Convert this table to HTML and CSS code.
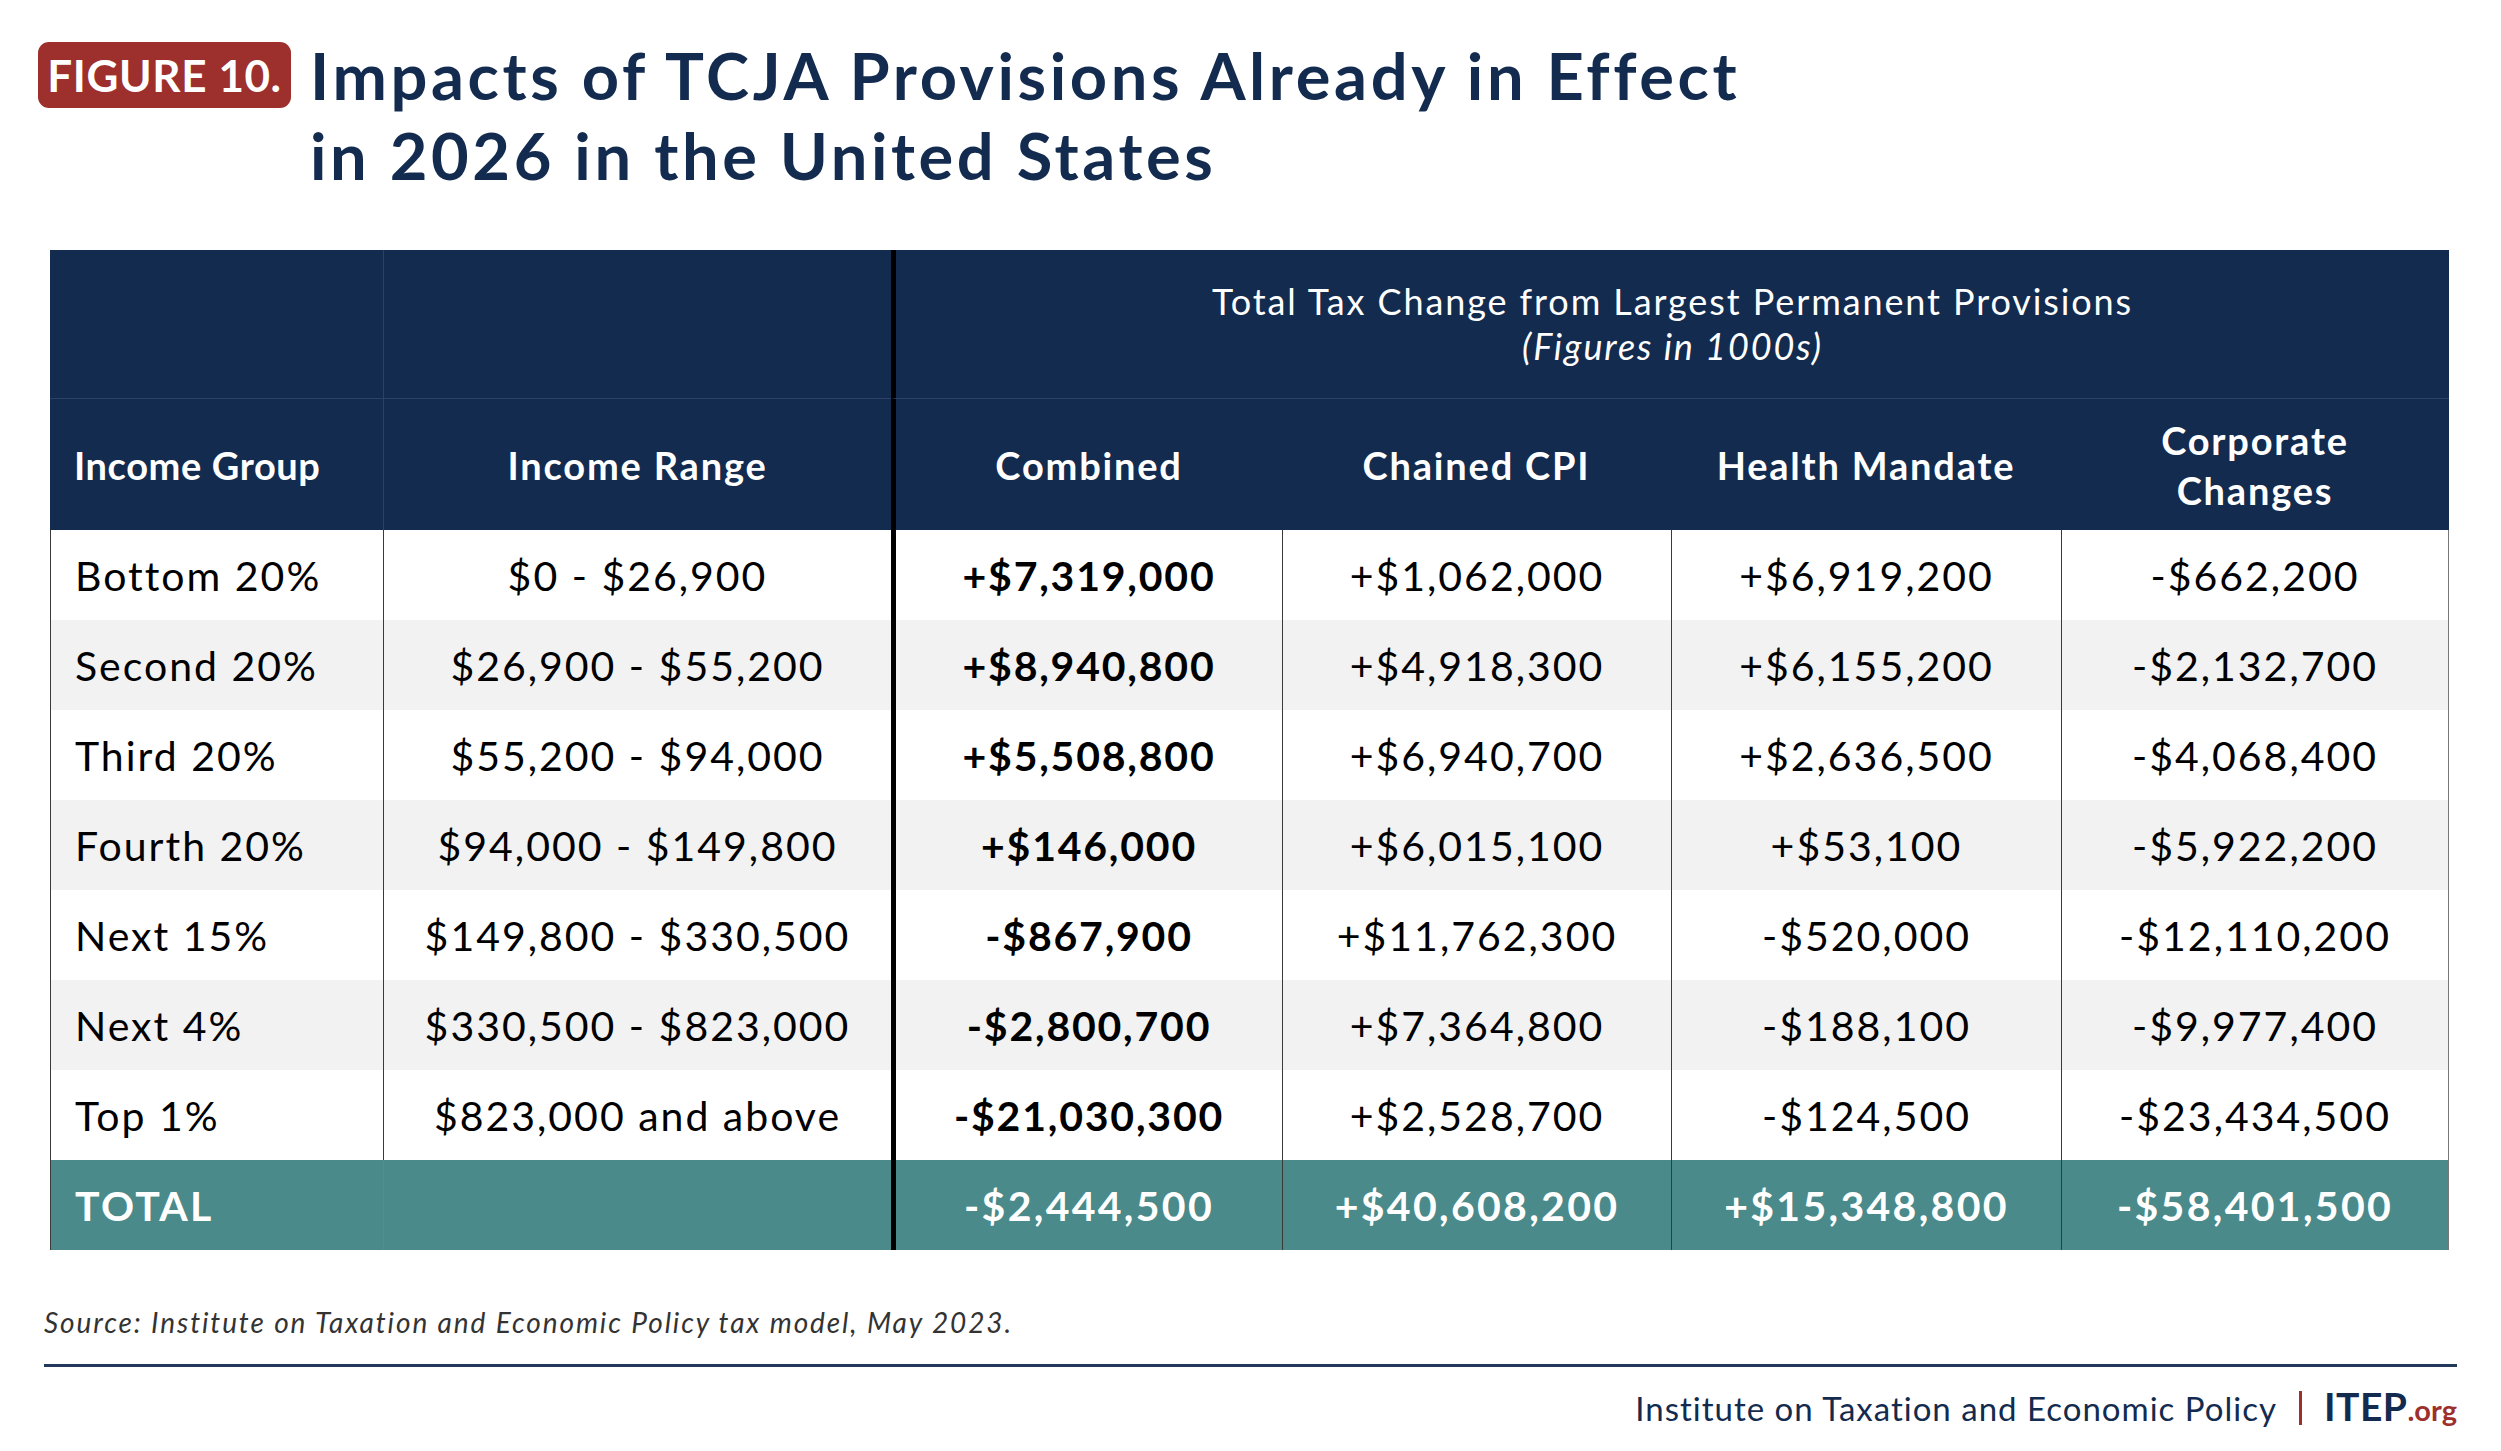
FILE: index.html
```html
<!DOCTYPE html>
<html lang="en">
<head>
<meta charset="utf-8">
<title>Impacts of TCJA Provisions Already in Effect in 2026 in the United States</title>
<link rel="stylesheet" href="styles.css">
</head>
<body>
<div class="page">
  <header class="title-block">
    <div class="badge">FIGURE 10.</div>
    <h1 class="title">Impacts of TCJA Provisions Already in Effect<br>in 2026 in the United States</h1>
  </header>

  <div class="grid">
    <div class="hc h1 c1"></div>
    <div class="hc h1 c2"></div>
    <div class="hc h1 span4">
      <div>Total Tax Change from Largest Permanent Provisions</div>
      <div class="ital">(Figures in 1000s)</div>
    </div>

    <div class="hc h2 c1 left">Income Group</div>
    <div class="hc h2 c2">Income Range</div>
    <div class="hc h2 c3">Combined</div>
    <div class="hc h2">Chained CPI</div>
    <div class="hc h2">Health Mandate</div>
    <div class="hc h2">Corporate<br>Changes</div>

    <div class="dc c1 left">Bottom 20%</div>
    <div class="dc c2">$0 - $26,900</div>
    <div class="dc c3 b">+$7,319,000</div>
    <div class="dc">+$1,062,000</div>
    <div class="dc">+$6,919,200</div>
    <div class="dc last">-$662,200</div>

    <div class="dc c1 left s">Second 20%</div>
    <div class="dc c2 s">$26,900 - $55,200</div>
    <div class="dc c3 b s">+$8,940,800</div>
    <div class="dc s">+$4,918,300</div>
    <div class="dc s">+$6,155,200</div>
    <div class="dc last s">-$2,132,700</div>

    <div class="dc c1 left">Third 20%</div>
    <div class="dc c2">$55,200 - $94,000</div>
    <div class="dc c3 b">+$5,508,800</div>
    <div class="dc">+$6,940,700</div>
    <div class="dc">+$2,636,500</div>
    <div class="dc last">-$4,068,400</div>

    <div class="dc c1 left s">Fourth 20%</div>
    <div class="dc c2 s">$94,000 - $149,800</div>
    <div class="dc c3 b s">+$146,000</div>
    <div class="dc s">+$6,015,100</div>
    <div class="dc s">+$53,100</div>
    <div class="dc last s">-$5,922,200</div>

    <div class="dc c1 left">Next 15%</div>
    <div class="dc c2">$149,800 - $330,500</div>
    <div class="dc c3 b">-$867,900</div>
    <div class="dc">+$11,762,300</div>
    <div class="dc">-$520,000</div>
    <div class="dc last">-$12,110,200</div>

    <div class="dc c1 left s">Next 4%</div>
    <div class="dc c2 s">$330,500 - $823,000</div>
    <div class="dc c3 b s">-$2,800,700</div>
    <div class="dc s">+$7,364,800</div>
    <div class="dc s">-$188,100</div>
    <div class="dc last s">-$9,977,400</div>

    <div class="dc c1 left">Top 1%</div>
    <div class="dc c2">$823,000 and above</div>
    <div class="dc c3 b">-$21,030,300</div>
    <div class="dc">+$2,528,700</div>
    <div class="dc">-$124,500</div>
    <div class="dc last">-$23,434,500</div>

    <div class="dc tot c1 left">TOTAL</div>
    <div class="dc tot c2"></div>
    <div class="dc tot c3">-$2,444,500</div>
    <div class="dc tot">+$40,608,200</div>
    <div class="dc tot">+$15,348,800</div>
    <div class="dc tot last">-$58,401,500</div>
  </div>

  <p class="source">Source: Institute on Taxation and Economic Policy tax model, May 2023.</p>

  <footer class="footer">
    <span class="inst">Institute on Taxation and Economic Policy</span>
    <span class="sep"></span>
    <span class="brand">ITEP<span class="org">.org</span></span>
  </footer>
</div>
</body>
</html>
```

FILE: styles.css
```css
* { box-sizing: border-box; }

html, body {
  margin: 0;
  padding: 0;
  background: #ffffff;
}

body {
  font-family: "Lato", "Liberation Sans", sans-serif;
  color: #000;
}

.page {
  width: 2501px;
  padding: 35px 0 0 44px;
}

.title-block {
  display: flex;
  align-items: flex-start;
  margin-left: -6px;
}

.badge {
  margin-top: 7px;
  width: 253px;
  height: 66px;
  background: #9d2f2d;
  border-radius: 11px;
  color: #fff;
  font-weight: 700;
  font-size: 44px;
  line-height: 66px;
  text-align: center;
  letter-spacing: 0.6px;
}

.title {
  margin: 0 0 0 19px;
  font-size: 65px;
  line-height: 80px;
  font-weight: 700;
  letter-spacing: 3.6px;
  color: #132b4e;
}

.grid {
  margin: 55px 0 0 6px;
  width: 2399px;
  display: grid;
  grid-template-columns: 333px 508px 391px 389px 390px 388px;
  grid-template-rows: 149px 131px repeat(8, 90px);
}

.hc {
  background: #132b4f;
  color: #fff;
  display: flex;
  align-items: center;
  justify-content: center;
  text-align: center;
}

.h1 {
  border-bottom: 1px solid #2a4265;
  font-size: 36px;
  line-height: 45px;
  letter-spacing: 1.9px;
  flex-direction: column;
}

.h1.c2 { border-left: 1px solid #2a4265; }
.h1.span4 {
  grid-column: span 4;
  border-left: 5px solid #000;
  padding-bottom: 0;
}

.ital { font-style: italic; }

.h2 {
  font-size: 38px;
  line-height: 50px;
  font-weight: 700;
  letter-spacing: 1.8px;
}

.h2.c1 { letter-spacing: 0.6px; }
.h2.c2 { border-left: 1px solid #2a4265; }
.h2.c3 { border-left: 5px solid #000; }

.left {
  justify-content: flex-start;
  text-align: left;
  padding-left: 24px;
}

.dc {
  display: flex;
  align-items: center;
  justify-content: center;
  font-size: 41px;
  letter-spacing: 2px;
  border-left: 1px solid #3a3a3a;
  background: #fff;
  white-space: nowrap;
}

.dc.left { justify-content: flex-start; }
.dc.c3 { border-left: 5px solid #000; }
.dc.last { border-right: 1px solid #777; }
.dc.s { background: #f2f2f2; }
.dc.b { font-weight: 700; letter-spacing: 1.8px; }

.dc.tot {
  background: #4a8a8a;
  color: #fff;
  font-weight: 700;
  letter-spacing: 2.3px;
}
.dc.tot.c2 { border-left-color: #4f8f8f; }

.source {
  margin: 55px 0 0 0;
  font-size: 28px;
  line-height: 34px;
  font-style: italic;
  letter-spacing: 1.9px;
  color: #333;
}

.footer {
  margin-top: 25px;
  width: 2413px;
  border-top: 3px solid #22395c;
  display: flex;
  justify-content: flex-end;
  align-items: center;
  padding-top: 19px;
  color: #132b4e;
}

.inst {
  font-size: 33px;
  line-height: 40px;
  letter-spacing: 1px;
}

.sep {
  width: 3px;
  height: 34px;
  background: #9d2f2d;
  margin: 0 22px 0 22px;
}

.brand {
  font-size: 39px;
  line-height: 40px;
  font-weight: 700;
  letter-spacing: 0.5px;
}

.org {
  color: #9d2f2d;
  font-size: 29px;
  letter-spacing: 0;
}
```
